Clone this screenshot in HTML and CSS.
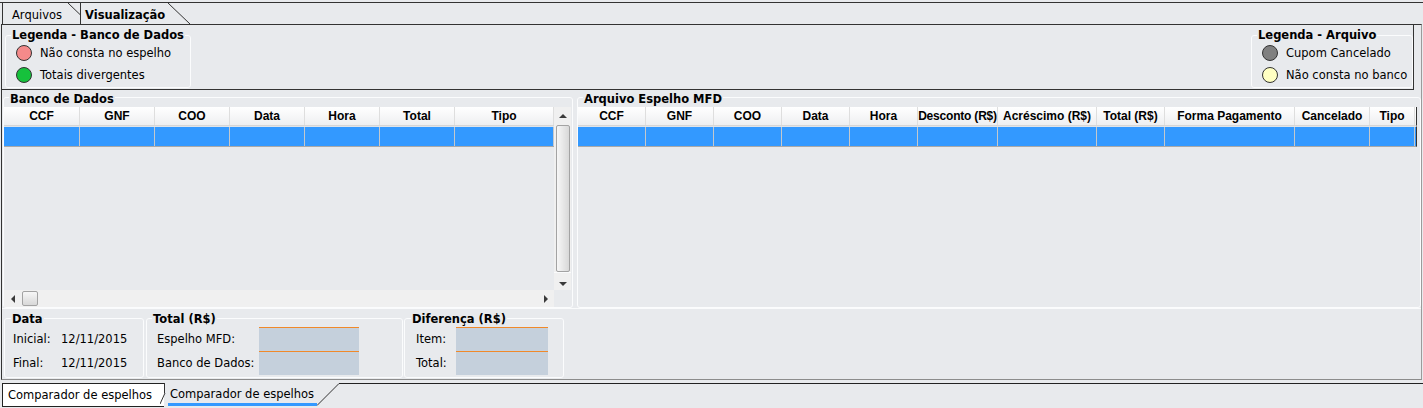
FILE: index.html
```html
<!DOCTYPE html>
<html lang="pt-BR">
<head>
	<meta charset="UTF-8">
	<title>Comparador de espelhos</title>
	<link rel="stylesheet" href="styles.css">
</head>
<body>
	<div class="tabs-top">
		<div class="ttab arq">Arquivos</div>
		<svg class="slant" width="12" height="21"><line x1="0" y1="0" x2="12" y2="11.5"/></svg>
		<div class="ttab vis">Visualização</div>
		<svg class="slant" width="22" height="21"><line x1="0" y1="0" x2="22" y2="21"/></svg>
	</div>

	<div class="frame">
		<div class="legend-bar">
			<div class="gbox legend legend-db">
				<div class="gtitle">Legenda - Banco de Dados</div>
				<div class="litem"><span class="dot pink"></span>Não consta no espelho</div>
				<div class="litem"><span class="dot green"></span>Totais divergentes</div>
			</div>
			<div class="gbox legend legend-arq">
				<div class="gtitle">Legenda - Arquivo</div>
				<div class="litem"><span class="dot gray"></span>Cupom Cancelado</div>
				<div class="litem"><span class="dot yellow"></span>Não consta no banco</div>
			</div>
		</div>

		<div class="grids">
			<div class="gbox grp grp-db">
				<div class="gtitle">Banco de Dados</div>
				<div class="grid db">
					<div class="grid-view">
						<div class="grid-cols">
							<div class="gh">
								<div>CCF</div><div>GNF</div><div>COO</div><div>Data</div><div>Hora</div><div>Total</div><div>Tipo</div>
							</div>
							<div class="gr">
								<div></div><div></div><div></div><div></div><div></div><div></div><div></div>
							</div>
						</div>
						<div class="vscroll">
							<div class="arr-area top"><span class="arr up"></span></div>
							<div class="vthumb"></div>
							<div class="arr-area bottom"><span class="arr down"></span></div>
						</div>
					</div>
					<div class="hscroll">
						<div class="harr"><span class="arr left"></span></div>
						<div class="hthumb"></div>
						<div class="hfill"></div>
						<div class="harr"><span class="arr right"></span></div>
					</div>
				</div>
			</div>

			<div class="gbox grp grp-mfd">
				<div class="gtitle">Arquivo Espelho MFD</div>
				<div class="grid mfd">
					<div class="gh">
						<div>CCF</div><div>GNF</div><div>COO</div><div>Data</div><div>Hora</div><div class="tight">Desconto (R$)</div><div>Acréscimo (R$)</div><div>Total (R$)</div><div>Forma Pagamento</div><div>Cancelado</div><div>Tipo</div>
					</div>
					<div class="gr">
						<div></div><div></div><div></div><div></div><div></div><div></div><div></div><div></div><div></div><div></div><div></div>
					</div>
				</div>
			</div>
		</div>

		<div class="bottom">
			<div class="gbox sum g-data">
				<div class="gtitle">Data</div>
				<div class="frow"><span class="flabel">Inicial:</span>12/11/2015</div>
				<div class="frow"><span class="flabel">Final:</span>12/11/2015</div>
			</div>
			<div class="gbox sum g-total">
				<div class="gtitle">Total (R$)</div>
				<div class="frow"><span class="flabel">Espelho MFD:</span><span class="fbox"></span></div>
				<div class="frow"><span class="flabel">Banco de Dados:</span><span class="fbox"></span></div>
			</div>
			<div class="gbox sum g-dif">
				<div class="gtitle">Diferença (R$)</div>
				<div class="frow"><span class="flabel">Item:</span><span class="fbox"></span></div>
				<div class="frow"><span class="flabel">Total:</span><span class="fbox"></span></div>
			</div>
		</div>
	</div>

	<div class="tabs-bottom">
		<div class="btab first">Comparador de espelhos</div>
		<svg class="bslash" width="8" height="23"><line x1="4.5" y1="0" x2="4.5" y2="10"/><line x1="0" y1="21" x2="5" y2="10"/></svg>
		<div class="btab second">Comparador de espelhos</div>
		<svg class="slant" width="22" height="23"><line x1="0" y1="22.5" x2="22" y2="0.5"/></svg>
		<div class="bfill"></div>
	</div>
</body>
</html>
```

FILE: styles.css
```css
*{padding:0;margin:0;box-sizing:border-box;}
body{
	width:1423px;
	height:408px;
	overflow:hidden;
	padding-top:2px;
	background:#e8eaed;
	color:#000;
	font-family:"DejaVu Sans",Tahoma,Verdana,sans-serif;
	font-size:11.5px;
}

/* top tabs */
.tabs-top{
	display:flex;
	height:22px;
	border-top:1px solid #333;
}
.ttab{
	height:21px;
	padding-top:3px;
	line-height:18px;
	border-left:1px solid #333;
	white-space:nowrap;
}
.ttab.arq{margin-left:2px;width:66px;padding-left:9px;}
.ttab.vis{width:88px;padding-left:4px;font-weight:bold;}
.slant line,.bslash line{stroke:#333;stroke-width:1;}

/* main frame */
.frame{
	width:1421px;
	margin-left:1px;
	border-top:1px solid #333;
	border-left:1px solid #333;
	border-right:1px solid #9b9b9b;
	border-bottom:1px solid #8c8c8c;
}
.gbox{
	border:1px solid #fbfcfd;
	border-radius:3px;
}
.gtitle{
	width:max-content;
	height:14px;
	line-height:14px;
	padding:0 1px;
	background:#e8eaed;
	font-weight:bold;
	white-space:nowrap;
}

/* legends */
.legend-bar{
	display:flex;
	justify-content:space-between;
	align-items:flex-start;
	width:1412px;
	height:65px;
	border-right:1px solid #333;
	border-bottom:1px solid #333;
}
.legend{margin-top:10px;height:53px;padding-left:10px;}
.legend-db{margin-left:3px;width:186px;}
.legend-arq{width:162px;}
.legend .gtitle{margin:-8px 0 0 -5px;}
.litem{
	display:flex;
	align-items:center;
	height:22px;
	white-space:nowrap;
}
.dot{
	width:16px;
	height:16px;
	margin-right:8px;
	border:1px solid #333;
	border-radius:50%;
}
.pink{background:#f48a8a;}
.green{background:#16c13c;}
.gray{background:#808080;}
.yellow{background:#ffffc2;}

/* grids */
.grids{display:flex;height:218px;}
.grp{margin-top:7px;height:211px;}
.grp .gtitle{margin:-6px 0 1px 5px;}
.grp-db{margin-left:1px;width:570px;}
.grp-mfd{margin-left:4px;width:844px;}
.grid-view{display:flex;height:183px;}
.grid-cols{width:550px;}
.gh,.gr{display:grid;}
.db .gh,.db .gr{grid-template-columns:76px 75px 75px 75px 75px 75px 99px;}
.mfd .gh,.mfd .gr{
	width:839px;
	grid-template-columns:68px 68px 68px 68px 68px 80px 99px 68px 130px 75px 45px;
	border-right:1px solid #333;
}
.gh{
	height:19px;
	border-bottom:1px solid #d6d6d6;
	background:linear-gradient(#ffffff,#eeeff1);
}
.gh div{
	border-right:1px solid #dedede;
	line-height:18px;
	text-align:center;
	white-space:nowrap;
	overflow:hidden;
	font-family:"Liberation Sans",Arial,sans-serif;
	font-size:12px;
	font-weight:bold;
}
.gh div.tight{letter-spacing:-0.2px;}
.gr{
	height:21px;
	border-top:1px solid #dfe4ea;
	border-bottom:1px solid #a9a9a9;
	background:#3399ff;
}
.gr div{border-right:1px solid #c4c8cc;}

/* scrollbars */
.vscroll{
	display:flex;
	flex-direction:column;
	align-items:center;
	width:17px;
	background:#f0f0f0;
}
.arr-area{display:flex;justify-content:center;width:100%;}
.arr-area.top{height:18px;align-items:center;}
.arr-area.bottom{flex:1;align-items:flex-end;padding-bottom:4px;}
.vthumb{
	width:14px;
	height:150px;
	border:1px solid #a3a3a3;
	border-radius:2px;
	background:linear-gradient(90deg,#f7f7f7,#d8d8d8);
}
.hscroll{
	display:flex;
	align-items:center;
	width:550px;
	height:17px;
	background:#f0f0f0;
}
.harr{display:flex;justify-content:center;align-items:center;width:17px;height:17px;}
.hthumb{
	width:16px;
	height:15px;
	margin-left:1px;
	border:1px solid #a3a3a3;
	border-radius:2px;
	background:linear-gradient(#f7f7f7,#d8d8d8);
}
.hfill{flex:1;}
.arr{width:0;height:0;border:4px solid transparent;}
.arr.up{border-top:none;border-bottom:4px solid #3a3a3a;}
.arr.down{border-bottom:none;border-top:4px solid #3a3a3a;}
.arr.left{border-left:none;border-right:4px solid #3a3a3a;}
.arr.right{border-right:none;border-left:4px solid #3a3a3a;}

/* totals */
.bottom{
	display:flex;
	align-items:flex-start;
	height:71px;
	padding-top:9px;
	border-top:1px solid #fafbfc;
}
.sum{height:60px;}
.sum .gtitle{margin:-7px 0 1px -5px;}
.g-data{margin-left:2px;width:140px;padding-left:8px;}
.g-data .gtitle{margin-left:-2px;}
.g-total{margin-left:2px;width:257px;padding-left:10px;}
.g-dif{margin-left:1px;width:160px;padding-left:11px;}
.frow{
	display:flex;
	align-items:center;
	height:24px;
	white-space:nowrap;
}
.g-data .flabel{width:48px;}
.g-total .flabel{width:102px;}
.g-dif .flabel{width:40px;}
.fbox{
	height:24px;
	border-top:1px solid #f0892a;
	background:#c5d0dc;
}
.g-total .fbox{width:100px;}
.g-dif .fbox{width:92px;}

/* bottom tabs */
.tabs-bottom{
	display:flex;
	height:28px;
	padding-top:3px;
}
.btab{white-space:nowrap;}
.btab.first{
	width:162px;
	height:24px;
	margin-left:2px;
	padding-left:5px;
	line-height:22px;
	border:1px solid #222;
	border-right:none;
	background:#fff;
}
.bslash{margin-left:-4px;}
.btab.second{
	width:149px;
	height:23px;
	padding:3px 0 0 2px;
	line-height:17px;
	border-bottom:3px solid #3399ff;
}
.bfill{flex:1;border-top:1px solid #222;}
```
